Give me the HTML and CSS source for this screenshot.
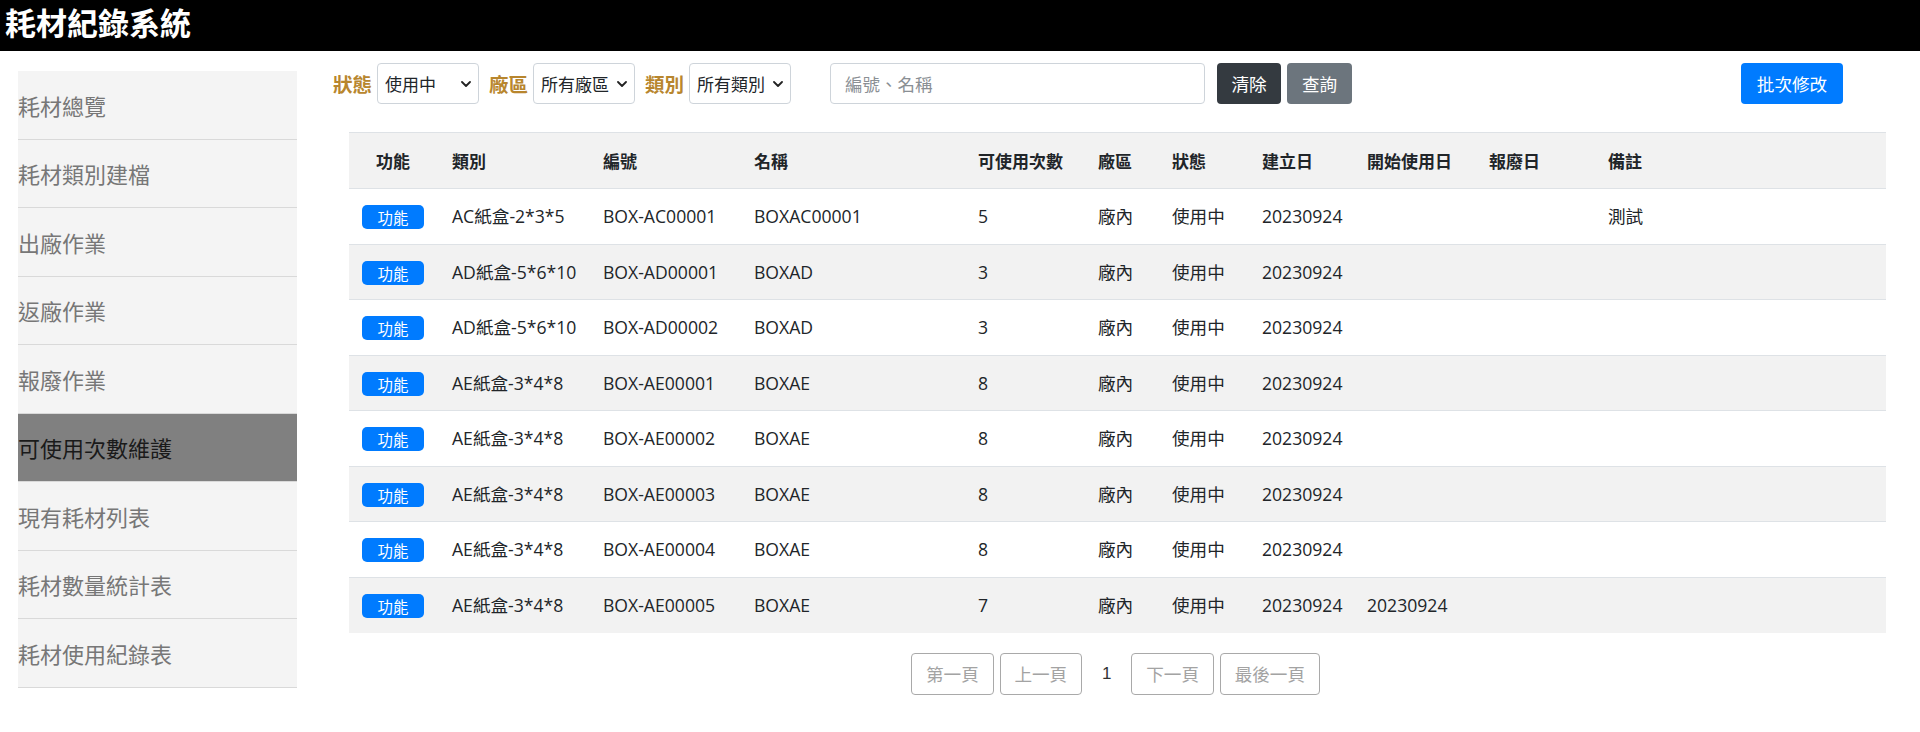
FILE: index.html
```html
<!DOCTYPE html>
<html lang="zh-Hant">
<head>
<meta charset="utf-8">
<title>耗材紀錄系統</title>
<link rel="stylesheet" href="styles.css">
</head>
<body>
<header class="topbar"><h1 class="title">耗材紀錄系統</h1></header>
<div class="layout">
  <nav class="sidebar">
    <a class="nav-item">耗材總覽</a>
    <a class="nav-item">耗材類別建檔</a>
    <a class="nav-item">出廠作業</a>
    <a class="nav-item">返廠作業</a>
    <a class="nav-item">報廢作業</a>
    <a class="nav-item active">可使用次數維護</a>
    <a class="nav-item">現有耗材列表</a>
    <a class="nav-item">耗材數量統計表</a>
    <a class="nav-item">耗材使用紀錄表</a>
  </nav>
  <main class="content">
    <div class="filters">
      <label class="flabel">狀態</label>
      <span class="select-wrap w1">
        <select class="fselect"><option>使用中</option></select>
        <svg class="chev" viewBox="0 0 10 6" width="10" height="6"><path d="M1 1l4 4 4-4" fill="none" stroke="#222" stroke-width="1.8" stroke-linecap="round" stroke-linejoin="round"/></svg>
      </span>
      <label class="flabel">廠區</label>
      <span class="select-wrap w2">
        <select class="fselect"><option>所有廠區</option></select>
        <svg class="chev" viewBox="0 0 10 6" width="10" height="6"><path d="M1 1l4 4 4-4" fill="none" stroke="#222" stroke-width="1.8" stroke-linecap="round" stroke-linejoin="round"/></svg>
      </span>
      <label class="flabel">類別</label>
      <span class="select-wrap w3">
        <select class="fselect"><option>所有類別</option></select>
        <svg class="chev" viewBox="0 0 10 6" width="10" height="6"><path d="M1 1l4 4 4-4" fill="none" stroke="#222" stroke-width="1.8" stroke-linecap="round" stroke-linejoin="round"/></svg>
      </span>
      <input class="search" type="text" placeholder="編號、名稱">
      <button class="btn btn-dark">清除</button>
      <button class="btn btn-gray">查詢</button>
      <button class="btn btn-blue batch">批次修改</button>
    </div>
    <div class="table-wrap">
      <table class="grid">
        <colgroup>
          <col style="width:88px"><col style="width:151px"><col style="width:151px"><col style="width:224px">
          <col style="width:120px"><col style="width:74px"><col style="width:90px"><col style="width:105px">
          <col style="width:122px"><col style="width:119px"><col style="width:293px">
        </colgroup>
        <thead>
          <tr><th class="c">功能</th><th>類別</th><th>編號</th><th>名稱</th><th>可使用次數</th><th>廠區</th><th>狀態</th><th>建立日</th><th>開始使用日</th><th>報廢日</th><th>備註</th></tr>
        </thead>
        <tbody>
          <tr><td class="c"><span class="fn">功能</span></td><td>AC紙盒-2*3*5</td><td>BOX-AC00001</td><td>BOXAC00001</td><td>5</td><td>廠內</td><td>使用中</td><td>20230924</td><td></td><td></td><td>測試</td></tr>
          <tr><td class="c"><span class="fn">功能</span></td><td>AD紙盒-5*6*10</td><td>BOX-AD00001</td><td>BOXAD</td><td>3</td><td>廠內</td><td>使用中</td><td>20230924</td><td></td><td></td><td></td></tr>
          <tr><td class="c"><span class="fn">功能</span></td><td>AD紙盒-5*6*10</td><td>BOX-AD00002</td><td>BOXAD</td><td>3</td><td>廠內</td><td>使用中</td><td>20230924</td><td></td><td></td><td></td></tr>
          <tr><td class="c"><span class="fn">功能</span></td><td>AE紙盒-3*4*8</td><td>BOX-AE00001</td><td>BOXAE</td><td>8</td><td>廠內</td><td>使用中</td><td>20230924</td><td></td><td></td><td></td></tr>
          <tr><td class="c"><span class="fn">功能</span></td><td>AE紙盒-3*4*8</td><td>BOX-AE00002</td><td>BOXAE</td><td>8</td><td>廠內</td><td>使用中</td><td>20230924</td><td></td><td></td><td></td></tr>
          <tr><td class="c"><span class="fn">功能</span></td><td>AE紙盒-3*4*8</td><td>BOX-AE00003</td><td>BOXAE</td><td>8</td><td>廠內</td><td>使用中</td><td>20230924</td><td></td><td></td><td></td></tr>
          <tr><td class="c"><span class="fn">功能</span></td><td>AE紙盒-3*4*8</td><td>BOX-AE00004</td><td>BOXAE</td><td>8</td><td>廠內</td><td>使用中</td><td>20230924</td><td></td><td></td><td></td></tr>
          <tr><td class="c"><span class="fn">功能</span></td><td>AE紙盒-3*4*8</td><td>BOX-AE00005</td><td>BOXAE</td><td>7</td><td>廠內</td><td>使用中</td><td>20230924</td><td>20230924</td><td></td><td></td></tr>
        </tbody>
      </table>
      <div class="pager">
        <button class="pbtn" disabled>第一頁</button>
        <button class="pbtn" disabled>上一頁</button>
        <span class="pnum">1</span>
        <button class="pbtn" disabled>下一頁</button>
        <button class="pbtn" disabled>最後一頁</button>
      </div>
    </div>
  </main>
</div>
</body>
</html>
```
FILE: styles.css
```css
* { box-sizing: border-box; }
body {
  margin: 0;
  font-family: "Open Sans", "Noto Sans CJK TC", sans-serif;
  color: #212529;
  background: #fff;
}
.topbar {
  background: #000;
  height: 51px;
  padding-left: 5px;
}
.title {
  margin: 0;
  color: #fff;
  font-size: 31px;
  font-weight: 700;
  line-height: 44px;
  font-family: "Noto Sans CJK TC", sans-serif;
}
.layout {
  display: flex;
  align-items: flex-start;
}
.sidebar {
  width: 279px;
  margin-left: 18px;
  margin-top: 20px;
  background: #f4f4f4;
  display: flex;
  flex-direction: column;
  flex-shrink: 0;
}
.nav-item {
  display: flex;
  align-items: center;
  height: 68.5px;
  border-bottom: 1px solid #d9d9d9;
  font-size: 22px;
  color: #777;
  font-family: "Noto Sans CJK TC", sans-serif;
}
.nav-item.active {
  background: #808080;
  color: #1a1a1a;
}
.content {
  flex: 1;
  margin-left: 36px;
  padding-right: 34px;
}
.filters {
  display: flex;
  align-items: center;
  margin-top: 12px;
  height: 41px;
  padding-right: 43px;
}
.flabel {
  font-family: "Noto Sans CJK TC", sans-serif;
  font-size: 19.5px;
  font-weight: 700;
  color: #b8862e;
  margin-right: 5px;
}
.select-wrap {
  position: relative;
  display: inline-block;
  height: 41px;
  margin-right: 10px;
}
.select-wrap.w1 { width: 102px; }
.select-wrap.w2 { width: 102px; }
.select-wrap.w3 { width: 102px; margin-right: 39px; }
.fselect {
  appearance: none;
  -webkit-appearance: none;
  width: 100%;
  height: 41px;
  border: 1px solid #ced4da;
  border-radius: 4px;
  background: #fff;
  padding: 0 0 0 7px;
  font-family: "Noto Sans CJK TC", sans-serif;
  font-size: 17px;
  color: #212529;
}
.chev {
  position: absolute;
  right: 8px;
  top: 18px;
  pointer-events: none;
}
.search {
  width: 375px;
  height: 41px;
  border: 1px solid #ced4da;
  border-radius: 4px;
  padding: 0 14px;
  font-family: "Noto Sans CJK TC", sans-serif;
  font-size: 17.5px;
  margin-right: 12px;
}
.search::placeholder { color: #8a8f94; }
.btn {
  height: 41px;
  border: 1px solid transparent;
  border-radius: 4px;
  padding: 0 13px;
  font-family: "Noto Sans CJK TC", sans-serif;
  font-size: 17.6px;
  color: #fff;
}
.btn-dark { background: #343a40; width: 64px; margin-right: 6px; }
.btn-gray { background: #6c757d; width: 65px; }
.btn-blue { background: #007bff; width: 102px; }
.batch { margin-left: auto; }
.table-wrap {
  margin-top: 28px;
  padding-left: 16px;
}
.grid {
  width: 1537px;
  border-collapse: collapse;
  table-layout: fixed;
  font-size: 17.6px;
}
.grid thead tr { height: 56px; }
.grid tbody tr { height: 55.5px; }
.grid th, .grid td {
  text-align: left;
  padding: 0 15px;
  line-height: 24px;
  border-top: 1px solid #dee2e6;
  white-space: nowrap;
  vertical-align: middle;
}
.grid th {
  font-weight: 700;
  background: #f2f2f2;
  font-family: "Noto Sans CJK TC", sans-serif;
  font-size: 17px;
}
.grid th.c, .grid td.c { text-align: center; padding-left: 0; padding-right: 0; }
.grid tbody tr:nth-child(even) td { background: #f2f2f2; }
.fn {
  display: inline-block;
  width: 62px;
  height: 24px;
  line-height: 24px;
  border-radius: 5px;
  background: #007bff;
  color: #fff;
  font-family: "Noto Sans CJK TC", sans-serif;
  font-size: 15.4px;
  text-align: center;
  vertical-align: middle;
}
.pager {
  width: 1533px;
  display: flex;
  justify-content: center;
  align-items: center;
  margin-top: 20px;
}
.pbtn {
  height: 42px;
  padding: 0 13.8px;
  background: #fff;
  border: 1px solid #a9a9a9;
  border-radius: 4px;
  color: #a3a3a3;
  font-family: "Noto Sans CJK TC", sans-serif;
  font-size: 17.6px;
  margin: 0 3px;
}
.pnum {
  font-family: "Liberation Sans", sans-serif;
  font-size: 17px;
  color: #333;
  padding: 0 17px;
}
```
